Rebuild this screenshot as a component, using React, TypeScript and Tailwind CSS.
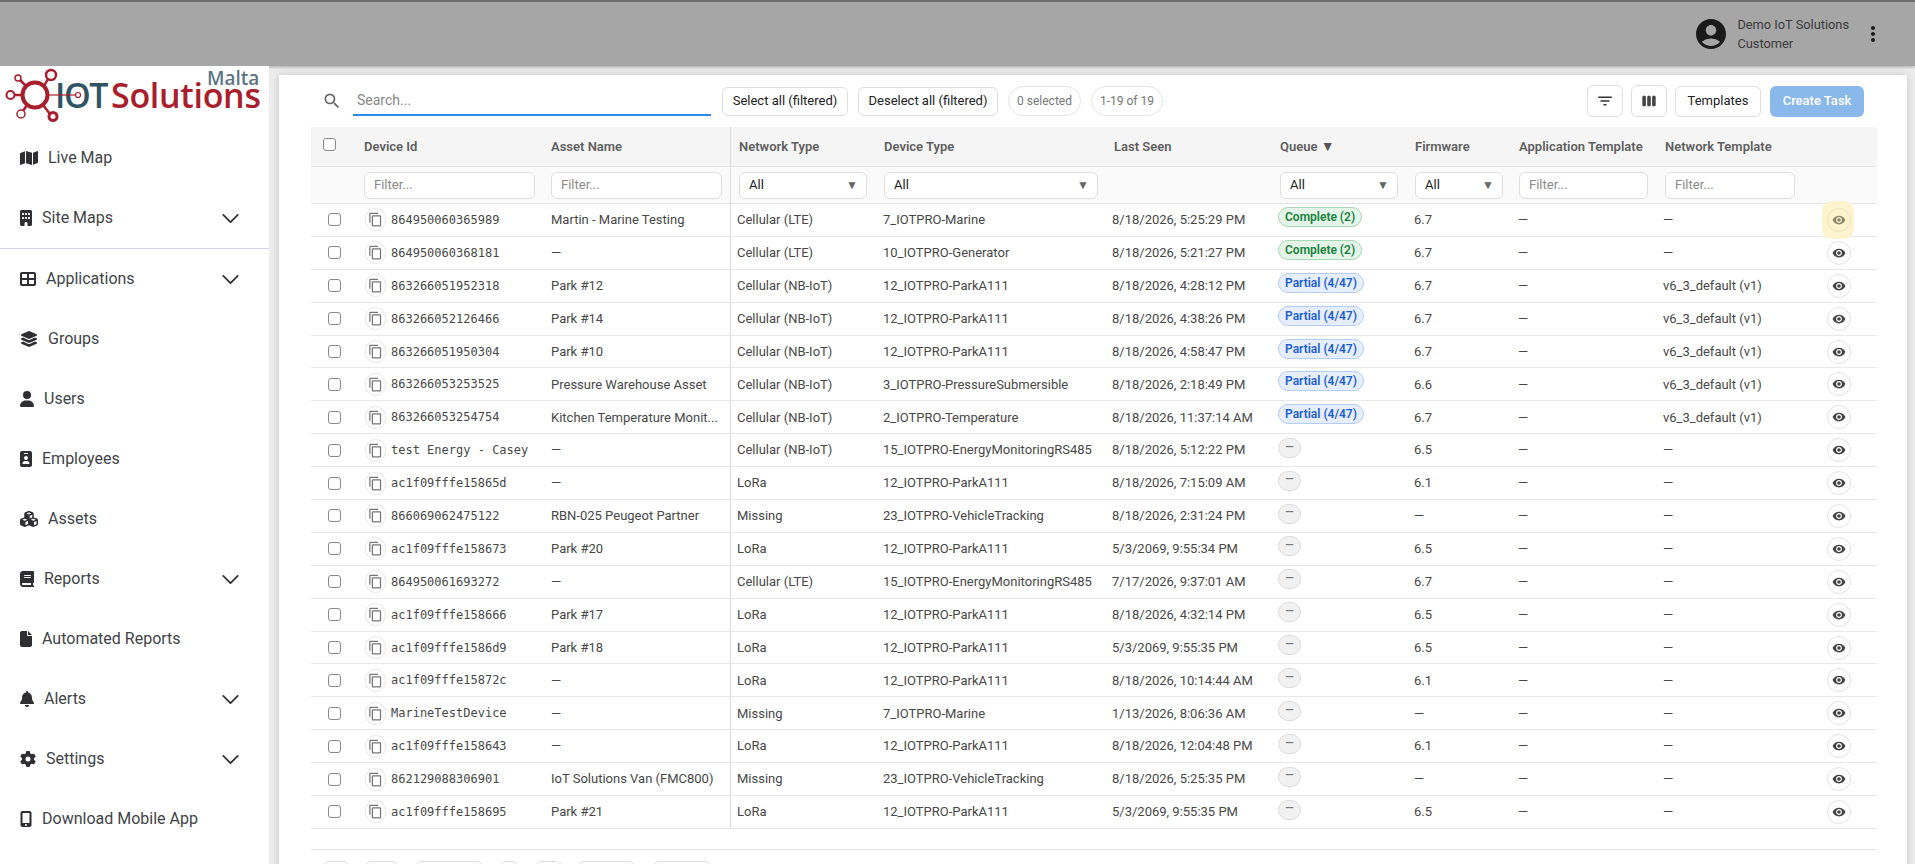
import type { ComponentType } from 'react'
import { ChevronDown } from 'lucide-react'
import {
  FaMap,
  FaBuilding,
  FaTableCellsLarge,
  FaLayerGroup,
  FaUser,
  FaIdBadge,
  FaCubes,
  FaBook,
  FaFile,
  FaBell,
  FaGear,
  FaMobileScreenButton,
} from 'react-icons/fa6'
import { MdAccountCircle, MdMoreVert, MdFilterList, MdViewWeek, MdContentCopy, MdVisibility, MdSearch } from 'react-icons/md'

type NavItem = { label: string; Icon: ComponentType<{ className?: string }>; size: string; chevron?: boolean; divider?: boolean }

const nav: NavItem[] = [
  { label: 'Live Map', Icon: FaMap, size: 'w-[18px]' },
  { label: 'Site Maps', Icon: FaBuilding, size: 'w-[12px]', chevron: true, divider: true },
  { label: 'Applications', Icon: FaTableCellsLarge, size: 'w-[16px]', chevron: true },
  { label: 'Groups', Icon: FaLayerGroup, size: 'w-[18px]' },
  { label: 'Users', Icon: FaUser, size: 'w-[14px]' },
  { label: 'Employees', Icon: FaIdBadge, size: 'w-[12px]' },
  { label: 'Assets', Icon: FaCubes, size: 'w-[18px]' },
  { label: 'Reports', Icon: FaBook, size: 'w-[14px]', chevron: true },
  { label: 'Automated Reports', Icon: FaFile, size: 'w-[12px]' },
  { label: 'Alerts', Icon: FaBell, size: 'w-[14px]', chevron: true },
  { label: 'Settings', Icon: FaGear, size: 'w-[16px]', chevron: true },
  { label: 'Download Mobile App', Icon: FaMobileScreenButton, size: 'w-[12px]' },
]

type Row = {
  id: string
  asset: string
  net: string
  type: string
  seen: string
  queue: 'complete' | 'partial' | 'none'
  fw: string
  tpl: string
}

const rows: Row[] = [
  { id: '864950060365989', asset: 'Martin - Marine Testing', net: 'Cellular (LTE)', type: '7_IOTPRO-Marine', seen: '8/18/2026, 5:25:29 PM', queue: 'complete', fw: '6.7', tpl: '—' },
  { id: '864950060368181', asset: '—', net: 'Cellular (LTE)', type: '10_IOTPRO-Generator', seen: '8/18/2026, 5:21:27 PM', queue: 'complete', fw: '6.7', tpl: '—' },
  { id: '863266051952318', asset: 'Park #12', net: 'Cellular (NB-IoT)', type: '12_IOTPRO-ParkA111', seen: '8/18/2026, 4:28:12 PM', queue: 'partial', fw: '6.7', tpl: 'v6_3_default (v1)' },
  { id: '863266052126466', asset: 'Park #14', net: 'Cellular (NB-IoT)', type: '12_IOTPRO-ParkA111', seen: '8/18/2026, 4:38:26 PM', queue: 'partial', fw: '6.7', tpl: 'v6_3_default (v1)' },
  { id: '863266051950304', asset: 'Park #10', net: 'Cellular (NB-IoT)', type: '12_IOTPRO-ParkA111', seen: '8/18/2026, 4:58:47 PM', queue: 'partial', fw: '6.7', tpl: 'v6_3_default (v1)' },
  { id: '863266053253525', asset: 'Pressure Warehouse Asset', net: 'Cellular (NB-IoT)', type: '3_IOTPRO-PressureSubmersible', seen: '8/18/2026, 2:18:49 PM', queue: 'partial', fw: '6.6', tpl: 'v6_3_default (v1)' },
  { id: '863266053254754', asset: 'Kitchen Temperature Monit...', net: 'Cellular (NB-IoT)', type: '2_IOTPRO-Temperature', seen: '8/18/2026, 11:37:14 AM', queue: 'partial', fw: '6.7', tpl: 'v6_3_default (v1)' },
  { id: 'test Energy - Casey', asset: '—', net: 'Cellular (NB-IoT)', type: '15_IOTPRO-EnergyMonitoringRS485', seen: '8/18/2026, 5:12:22 PM', queue: 'none', fw: '6.5', tpl: '—' },
  { id: 'ac1f09fffe15865d', asset: '—', net: 'LoRa', type: '12_IOTPRO-ParkA111', seen: '8/18/2026, 7:15:09 AM', queue: 'none', fw: '6.1', tpl: '—' },
  { id: '866069062475122', asset: 'RBN-025 Peugeot Partner', net: 'Missing', type: '23_IOTPRO-VehicleTracking', seen: '8/18/2026, 2:31:24 PM', queue: 'none', fw: '—', tpl: '—' },
  { id: 'ac1f09fffe158673', asset: 'Park #20', net: 'LoRa', type: '12_IOTPRO-ParkA111', seen: '5/3/2069, 9:55:34 PM', queue: 'none', fw: '6.5', tpl: '—' },
  { id: '864950061693272', asset: '—', net: 'Cellular (LTE)', type: '15_IOTPRO-EnergyMonitoringRS485', seen: '7/17/2026, 9:37:01 AM', queue: 'none', fw: '6.7', tpl: '—' },
  { id: 'ac1f09fffe158666', asset: 'Park #17', net: 'LoRa', type: '12_IOTPRO-ParkA111', seen: '8/18/2026, 4:32:14 PM', queue: 'none', fw: '6.5', tpl: '—' },
  { id: 'ac1f09fffe1586d9', asset: 'Park #18', net: 'LoRa', type: '12_IOTPRO-ParkA111', seen: '5/3/2069, 9:55:35 PM', queue: 'none', fw: '6.5', tpl: '—' },
  { id: 'ac1f09fffe15872c', asset: '—', net: 'LoRa', type: '12_IOTPRO-ParkA111', seen: '8/18/2026, 10:14:44 AM', queue: 'none', fw: '6.1', tpl: '—' },
  { id: 'MarineTestDevice', asset: '—', net: 'Missing', type: '7_IOTPRO-Marine', seen: '1/13/2026, 8:06:36 AM', queue: 'none', fw: '—', tpl: '—' },
  { id: 'ac1f09fffe158643', asset: '—', net: 'LoRa', type: '12_IOTPRO-ParkA111', seen: '8/18/2026, 12:04:48 PM', queue: 'none', fw: '6.1', tpl: '—' },
  { id: '862129088306901', asset: 'IoT Solutions Van (FMC800)', net: 'Missing', type: '23_IOTPRO-VehicleTracking', seen: '8/18/2026, 5:25:35 PM', queue: 'none', fw: '—', tpl: '—' },
  { id: 'ac1f09fffe158695', asset: 'Park #21', net: 'LoRa', type: '12_IOTPRO-ParkA111', seen: '5/3/2069, 9:55:35 PM', queue: 'none', fw: '6.5', tpl: '—' },
]

function Logo() {
  return (
    <div className="relative h-[66px] w-[269px] shrink-0">
      <span className="absolute left-[55px] top-[18px] font-['Open_Sans',sans-serif] text-[34px] font-semibold leading-[22px] tracking-[-1.4px] text-[#2f5565]">
        IOT
      </span>
      <span className="absolute left-[111px] top-[18px] font-['Open_Sans',sans-serif] text-[34px] font-semibold leading-[22px] tracking-[-0.3px] text-[#a91e2c]">
        Solutions
      </span>
      <span className="absolute left-[207px] top-[6px] font-['Open_Sans',sans-serif] text-[19px] font-semibold leading-[12px] text-[#5b7584]">
        Malta
      </span>
      <svg className="absolute left-0 top-0" width="110" height="66" viewBox="0 0 110 66" fill="none">
        <g stroke="#a91e2c" strokeWidth="2.5">
          <circle cx="35" cy="29" r="12.5" strokeWidth="4" />
          <line x1="44" y1="20" x2="48" y2="13" />
          <line x1="26" y1="20" x2="20" y2="14" />
          <line x1="22" y1="29" x2="14" y2="29" />
          <line x1="27" y1="39" x2="23" y2="45" />
          <line x1="43" y1="39" x2="50" y2="48" />
          <circle cx="51" cy="9" r="5" strokeWidth="2.5" fill="#fff" />
          <circle cx="18" cy="12" r="3" strokeWidth="1.5" fill="#fff" />
          <circle cx="10.5" cy="29" r="4" strokeWidth="2" fill="#fff" />
          <circle cx="21" cy="48" r="4" strokeWidth="1.5" fill="#fff" />
          <circle cx="53" cy="50.5" r="4" strokeWidth="3" fill="#fff" />
          <line x1="46" y1="29" x2="75" y2="29" strokeWidth="1.2" />
          <circle cx="78" cy="29" r="2.5" strokeWidth="1.2" fill="#fff" />
        </g>
      </svg>
    </div>
  )
}

function Sidebar() {
  return (
    <aside className="h-[798px] w-[269px] shrink-0 overflow-hidden bg-white text-[#3f4448]">
      <Logo />
      <nav className="pt-[14px]">
        {nav.map(({ label, Icon, size, chevron, divider }) => (
          <div key={label} className={divider ? 'mb-[18px] border-b border-[#d5d5e2] pb-[18px]' : 'mb-[36px]'}>
            <div className="flex h-[24px] items-center pl-[20px] pr-[24px]">
              <div className="flex flex-1 items-center gap-[10px]">
                <Icon className={`h-[16px] shrink-0 text-[#2e2e33] ${size}`} />
                <span className="text-[16px] leading-[24px]">{label}</span>
              </div>
              {chevron && <ChevronDown className="h-[29px] w-[29px] text-[#333]" strokeWidth={1.5} />}
            </div>
          </div>
        ))}
      </nav>
    </aside>
  )
}

function FilterInput({ width }: { width: string }) {
  return (
    <div className={`flex h-[27px] items-center rounded-[6px] border border-[#dfdfdf] bg-white pl-[9px] text-[13px] text-[#8a8a8a] ${width}`}>
      Filter...
    </div>
  )
}

function FilterSelect({ width }: { width: string }) {
  return (
    <div className={`flex h-[27px] items-center justify-between rounded-[6px] border border-[#dfdfdf] bg-white pl-[9px] pr-[8px] text-[13px] text-[#222] ${width}`}>
      <span>All</span>
      <span className="text-[12px] text-[#666]">▼</span>
    </div>
  )
}

function QueueBadge({ queue }: { queue: Row['queue'] }) {
  if (queue === 'complete') {
    return (
      <span className="inline-flex h-[20px] items-center rounded-full border border-[#a6d8b5] bg-[#e4f4e8] px-[6px] text-[12px] font-semibold text-[#17803d]">
        Complete (2)
      </span>
    )
  }
  if (queue === 'partial') {
    return (
      <span className="inline-flex h-[20px] items-center rounded-full border border-[#b4ccf6] bg-[#e6eefd] px-[6px] text-[12px] font-semibold text-[#1d5fd0]">
        Partial (4/47)
      </span>
    )
  }
  return (
    <span className="inline-flex h-[20px] w-[23px] items-center justify-center rounded-full border border-[#dcdcdc] bg-[#f1f1f1] text-[11px] font-semibold text-[#777]">
      —
    </span>
  )
}

function DataRow({ row, index }: { row: Row; index: number }) {
  const first = index === 0
  return (
    <div className="flex h-[32.9px] items-center border-b border-[#e8e8e8] text-[13px] text-[#484848]">
      <div className="w-[53px] pl-[17px]">
        <span className="block h-[13px] w-[13px] rounded-[3px] border-[1.5px] border-[#8a8a8a] bg-white" />
      </div>
      <div className="flex w-[187px] items-center pl-[1px]">
        <span className="flex h-[23px] w-[21px] items-center justify-center rounded-full border border-[#e6e6e6] bg-white">
          <MdContentCopy className="h-[15px] w-[15px] text-[#777]" />
        </span>
        <span className="ml-[5px] whitespace-nowrap font-['DejaVu_Sans_Mono',monospace] text-[12px] text-[#484848]">{row.id}</span>
      </div>
      <div className="w-[179px] whitespace-nowrap">{row.asset}</div>
      <div className="flex h-full w-[153px] items-center border-l border-[#dcdcdc] pl-[6px]">{row.net}</div>
      <div className="w-[229px] whitespace-nowrap">{row.type}</div>
      <div className="w-[166px] whitespace-nowrap">{row.seen}</div>
      <div className="w-[136px] -translate-y-[3px]">
        <QueueBadge queue={row.queue} />
      </div>
      <div className="w-[104px]">{row.fw}</div>
      <div className="w-[145px]">—</div>
      <div className="w-[164px] whitespace-nowrap">{row.tpl}</div>
      <div className="relative flex h-[24px] w-[24px] items-center justify-center">
        {first && <span className="absolute -left-[5px] -top-[7px] h-[38px] w-[32px] rounded-[10px] bg-[#fdf3cc]" />}
        <span className={first ? 'relative flex h-[24px] w-[24px] items-center justify-center rounded-full border border-[#ece3c0]' : 'relative flex h-[24px] w-[24px] items-center justify-center rounded-full border border-[#e2e2e2] bg-white'}>
          <MdVisibility className={first ? 'h-[14px] w-[14px] text-[#8d8a6c]' : 'h-[14px] w-[14px] text-[#444]'} />
        </span>
      </div>
    </div>
  )
}

function Table() {
  return (
    <div className="w-[1566px]">
      <div className="flex h-[40px] items-center border-b border-[#e4e4e4] bg-[#f5f5f5] text-[13px] font-semibold text-[#5f5f5f]">
        <div className="w-[53px] pb-[4px] pl-[12px]">
          <span className="block h-[13px] w-[13px] rounded-[3px] border-[1.5px] border-[#8a8a8a] bg-white" />
        </div>
        <div className="w-[187px]">Device Id</div>
        <div className="w-[179px]">Asset Name</div>
        <div className="flex h-full w-[154px] items-center border-l border-[#dcdcdc] pl-[8px]">Network Type</div>
        <div className="w-[230px]">Device Type</div>
        <div className="w-[166px]">Last Seen</div>
        <div className="w-[135px]">Queue <span className="text-[14px] text-[#555]">▼</span></div>
        <div className="w-[104px]">Firmware</div>
        <div className="w-[146px] whitespace-nowrap">Application Template</div>
        <div className="w-[150px]">Network Template</div>
      </div>
      <div className="flex h-[37px] items-center border-b border-[#e4e4e4] bg-[#fafafa]">
        <div className="w-[53px]" />
        <div className="w-[187px]"><FilterInput width="w-[171px]" /></div>
        <div className="w-[179px]"><FilterInput width="w-[171px]" /></div>
        <div className="flex h-full w-[154px] items-center border-l border-[#dcdcdc] pl-[8px]"><FilterSelect width="w-[128px]" /></div>
        <div className="w-[230px]"><FilterSelect width="w-[214px]" /></div>
        <div className="w-[166px]" />
        <div className="w-[135px]"><FilterSelect width="w-[118px]" /></div>
        <div className="w-[104px]"><FilterSelect width="w-[88px]" /></div>
        <div className="w-[146px]"><FilterInput width="w-[129px]" /></div>
        <div className="w-[150px]"><FilterInput width="w-[130px]" /></div>
      </div>
      {rows.map((row, index) => (
        <DataRow key={row.id} row={row} index={index} />
      ))}
    </div>
  )
}

export default function App() {
  return (
    <div className="flex h-[864px] w-[1915px] flex-col overflow-hidden bg-[#ededed] font-['Roboto',sans-serif]">
      <header className="flex h-[66px] shrink-0 items-center justify-end border-t-2 border-[#6e6e6e] bg-[#a6a6a6] pr-[30px] shadow-[0_1px_3px_rgba(0,0,0,0.3)]">
        <MdAccountCircle className="h-[36px] w-[36px] text-[#1a1a1a]" />
        <div className="ml-[8px] pb-[1px] text-[12.8px] leading-[19px] text-[#3a3a3a]">
          <div>Demo IoT Solutions</div>
          <div>Customer</div>
        </div>
        <MdMoreVert className="ml-[12px] h-[24px] w-[24px] text-[#1a1a1a]" />
      </header>
      <div className="flex min-h-0 flex-1">
        <Sidebar />
        <main className="ml-[10px] mt-[9px] h-[900px] w-[1628px] bg-white pl-[32px] shadow-[0_0_8px_rgba(0,0,0,0.18)]">
          <div className="flex h-[52px] w-[1566px] items-center pl-[11px] pr-[13px]">
            <MdSearch className="h-[20px] w-[20px] text-[#666]" />
            <div className="ml-[11px] flex h-[30px] w-[358px] items-center border-b-2 border-[#2a8be8] pl-[4px] text-[14px] text-[#888]">
              Search...
            </div>
            <button className="ml-[11px] h-[29px] w-[126px] rounded-[6px] border border-[#dedede] bg-white text-[13px] text-[#222]">Select all (filtered)</button>
            <button className="ml-[10px] h-[29px] w-[140px] rounded-[6px] border border-[#dedede] bg-white text-[13px] text-[#222]">Deselect all (filtered)</button>
            <span className="ml-[10px] flex h-[30px] w-[73px] items-center justify-center rounded-full border border-[#e4e4e4] text-[12px] text-[#777]">0 selected</span>
            <span className="ml-[10px] flex h-[30px] w-[72px] items-center justify-center rounded-full border border-[#e4e4e4] text-[12px] text-[#777]">1-19 of 19</span>
            <div className="flex-1" />
            <button className="flex h-[32px] w-[36px] items-center justify-center rounded-[6px] border border-[#dedede] bg-white">
              <MdFilterList className="h-[18px] w-[18px] text-[#333]" />
            </button>
            <button className="ml-[8px] flex h-[32px] w-[36px] items-center justify-center rounded-[6px] border border-[#dedede] bg-white">
              <MdViewWeek className="h-[16px] w-[16px] text-[#444]" />
            </button>
            <button className="ml-[8px] h-[31px] w-[86px] rounded-[6px] border border-[#dedede] bg-white text-[13px] text-[#222]">Templates</button>
            <button className="ml-[9px] h-[31px] w-[94px] rounded-[6px] bg-[#8ab8ea] text-[13px] font-medium text-white">Create Task</button>
          </div>
          <Table />
          <div className="mt-[20px] flex w-[1566px] items-start border-t border-[#e4e4e4] pl-[12px] pt-[11px]">
            <span className="h-[30px] w-[26px] rounded-[6px] border border-[#dedede] bg-white" />
            <span className="ml-[16px] h-[30px] w-[33px] rounded-[6px] border border-[#dedede] bg-white" />
            <span className="ml-[17px] h-[30px] w-[68px] rounded-[6px] border border-[#dedede] bg-white" />
            <span className="ml-[17px] h-[30px] w-[18px] rounded-[6px] border border-[#dedede] bg-white" />
            <span className="ml-[17px] h-[30px] w-[27px] rounded-[6px] border border-[#dedede] bg-white" />
            <span className="ml-[16px] h-[30px] w-[57px] rounded-[6px] border border-[#dedede] bg-white" />
            <span className="ml-[18px] h-[30px] w-[58px] rounded-[6px] border border-[#dedede] bg-white" />
          </div>
        </main>
      </div>
    </div>
  )
}
